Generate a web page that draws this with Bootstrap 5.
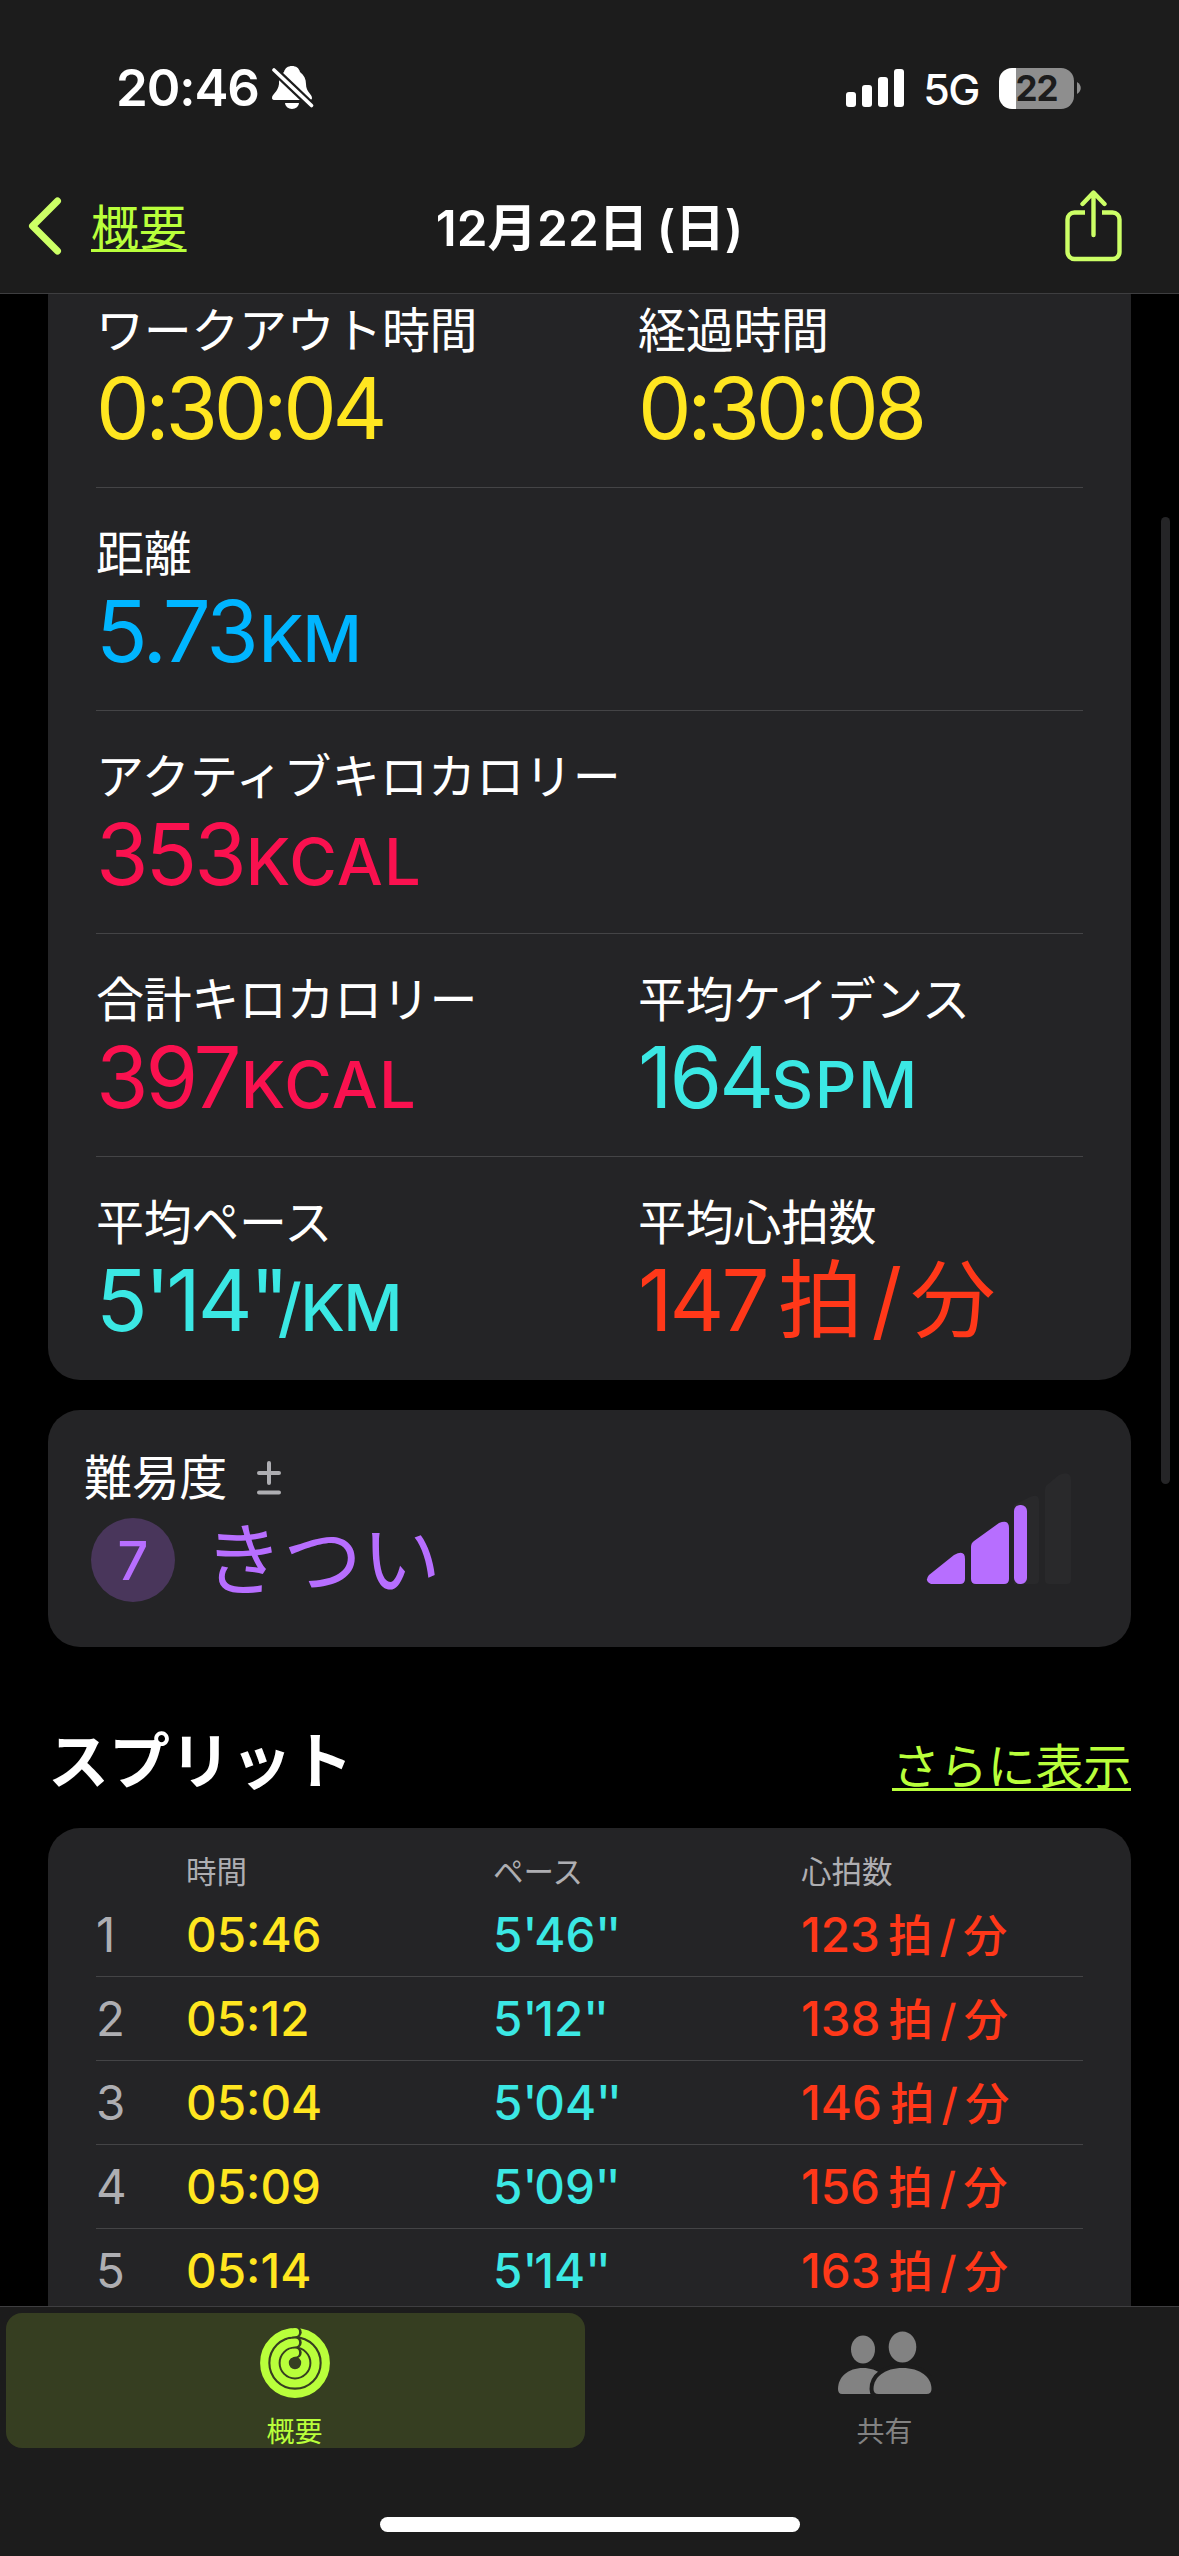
<!DOCTYPE html>
<html lang="ja" data-bs-theme="dark">
<head>
<meta charset="utf-8">
<meta name="viewport" content="width=device-width, initial-scale=1">
<title>12月22日 (日)</title>
<link href="https://cdn.jsdelivr.net/npm/bootstrap@5.3.0/dist/css/bootstrap.min.css" rel="stylesheet">
<style>
  :root { --lime:#b9ff3b; --panel:#242426; --bar:#1c1c1c; --rule:#444446; }
  body { font-family:"Inter","Noto Sans CJK JP",sans-serif; background:#000; color:#fff; width:1179px; height:2556px; overflow:hidden; }
  svg { display:block; flex:none; }
  .app-top { background:var(--bar); height:294px; border-bottom:1px solid #3e3e40; flex:none; z-index:2; }
  .status { height:176px; padding:0 98px 0 116px; }
  .clock { font-size:51px; font-weight:600; line-height:60px; letter-spacing:-1.1px; margin-right:13px; }
  .net { font-size:43px; font-weight:500; line-height:60px; letter-spacing:-1.5px; margin:2px 20px 0 18px; }
  .batt { width:75px; height:41px; border-radius:13px; background:linear-gradient(90deg,#fff 17px,#8e8e8e 17px); color:var(--bar); font-size:35px; font-weight:700; line-height:41px; letter-spacing:-1px; }
  .titlebar { height:100px; padding:0 28px; }
  .titlebar > * { flex:1 1 0; }
  .lime-link { color:var(--lime); font-size:48px; line-height:64px; letter-spacing:-.2px; text-decoration:underline; text-decoration-thickness:3px; text-underline-offset:4px; text-decoration-skip-ink:none; }
  .back-text { margin:3px 0 0 29px; }
  .title { font-size:49.5px; font-weight:600; line-height:64px; white-space:nowrap; word-spacing:-4px; padding-top:3px; }
  .share-icon { margin-right:28px; }
  .feed { height:2012px; padding:0 48px; overflow:hidden; flex:none; }
  .panel { background:var(--panel); border-radius:32px; }
  .summary { margin-top:-29px; padding:0 48px; height:1115px; }
  .metric { height:223px; padding-top:34px; border-bottom:1px solid var(--rule); }
  .metric:last-child { border-bottom:0; }
  .metric > div { width:542px; flex:none; }
  .m-label { font-size:48px; line-height:64px; letter-spacing:-.35px; white-space:nowrap; }
  .m-label.long { letter-spacing:.2px; }
  .m-value { font-size:85px; line-height:92px; letter-spacing:-3px; white-space:nowrap; word-spacing:-9.5px; }
  .m-value.c-time { letter-spacing:-4.3px; }
  .unit { font-size:65px; font-weight:500; letter-spacing:-1px; margin-left:3px; }
  .unit.kcal { letter-spacing:1.2px; margin-left:2px; }
  .unit.spm { letter-spacing:1.5px; margin-left:0; }
  .unit.per { margin-left:0; letter-spacing:-1.5px; }
  .m-value .tick { letter-spacing:-4px; }
  .m-value .tick.pair { letter-spacing:-11.5px; }
  .c-time { color:#ffe620; } .c-dist { color:#00b5ff; } .c-cal { color:#fa114f; } .c-pace { color:#3be8e4; } .c-heart { color:#ff3819; }
  .effort { margin-top:30px; height:237px; padding:36px 60px 0 36px; }
  .plusminus { margin-left:29px; }
  .level-line { margin-top:8px; }
  .level { width:84px; height:84px; border-radius:50%; background:#49365b; color:#b76eff; font-size:54px; font-weight:500; margin-left:7px; }
  .level-name { color:#b76eff; font-size:79px; line-height:84px; margin-left:29px; }
  .effort-chart { margin-top:27px; }
  .section-head { height:181px; padding-top:75px; }
  .section-name { font-size:61px; font-weight:700; line-height:80px; margin:0; }
  .more { margin-top:13px; }
  .splits { height:520px; padding:0 48px; }
  .split { display:grid; grid-template-columns:90px 307px 308px 1fr; height:84px; line-height:83px; font-size:47.5px; font-weight:500; border-bottom:1px solid var(--rule); white-space:nowrap; word-spacing:-4.3px; }
  .split .tick { letter-spacing:-3px; }
  .split .tick.pair { letter-spacing:-4px; }
  .split-head { height:65px; padding-top:23px; line-height:42px; font-size:30.5px; font-weight:400; color:#aeaeb2; border:0; }
  .idx { color:#aeaeb2; font-weight:400; }
  .bpm { font-size:44px; }
  .tabs { height:250px; background:var(--bar); border-top:1px solid #3e3e40; flex:none; padding:6px 6px 0; position:relative; }
  .tab { width:579px; height:135px; border-radius:16px; font-size:28px; line-height:36px; color:#828282; padding-top:15px; }
  .tab.on { background:#363e21; color:var(--lime); padding-right:2px; }
  .home-bar { position:absolute; left:380px; top:210px; width:420px; height:15px; border-radius:8px; background:#fff; }
  .thumb { position:absolute; left:1161px; top:517px; width:9px; height:967px; border-radius:5px; background:#252527; }
</style>
</head>
<body class="d-flex flex-column position-relative">
<header class="app-top">
  <div class="status d-flex align-items-center">
    <span class="clock">20:46</span>
    <svg width="42" height="44" viewBox="0 0 42 44"><path fill="#fff" d="M20 0c-4 0-7 2-8 6C8 9 7 13 7 18 6 26 0 28 0 32q0 2 3 2h34q3 0 3-2c0-4-6-6-6-14 0-5-2-9-6-12-1-4-4-6-8-6zM13 37h14a7 6 0 0 1-14 0z"/><path d="M-1 1 42 42" stroke="#1c1c1c" stroke-width="8"/><path d="M2 4 39.5 39.5" stroke="#fff" stroke-width="3.6" stroke-linecap="round"/></svg>
    <div class="ms-auto d-flex align-items-center">
      <svg width="59" height="38" viewBox="0 0 59 38" fill="#fff"><rect y="23" width="10" height="15" rx="3"/><rect x="16" y="16" width="10" height="22" rx="3"/><rect x="32" y="8" width="10" height="30" rx="3"/><rect x="48" width="10" height="38" rx="3"/></svg>
      <span class="net">5G</span>
      <span class="batt text-center">22</span>
      <svg width="7" height="12" viewBox="0 0 7 12"><path d="M3 0c5 3 5 9 0 12z" fill="#8e8e8e"/></svg>
    </div>
  </div>
  <nav class="titlebar d-flex align-items-center">
    <div class="d-flex align-items-center">
      <svg width="34" height="58" viewBox="0 0 34 58"><path d="M29.5 4 4.5 29 29.5 54" fill="none" stroke="#ccff66" stroke-width="7" stroke-linecap="round" stroke-linejoin="round"/></svg>
      <a class="lime-link back-text" href="#">概要</a>
    </div>
    <div class="title text-center">12月22日 (日)</div>
    <div class="d-flex justify-content-end">
      <svg class="share-icon" width="58" height="72" viewBox="0 0 58 72" fill="none" stroke="#ccff66" stroke-width="4.4"><path d="M20 22.5H9.5a7 7 0 0 0-7 7V62a7 7 0 0 0 7 7h38a7 7 0 0 0 7-7V29.500a7 7 0 0 0-7-7H37"/><path d="M28.500 3v42M17.500 14 28.500 2.500 39.500 14" stroke-linecap="round" stroke-linejoin="round"/></svg>
    </div>
  </nav>
</header>

<main class="feed">
  <section class="panel summary">
    <div class="metric d-flex">
      <div><div class="m-label">ワークアウト時間</div><div class="m-value c-time">0:30:04</div></div>
      <div><div class="m-label">経過時間</div><div class="m-value c-time">0:30:08</div></div>
    </div>
    <div class="metric d-flex"><div><div class="m-label">距離</div><div class="m-value c-dist">5.73<span class="unit">KM</span></div></div></div>
    <div class="metric d-flex"><div><div class="m-label long">アクティブキロカロリー</div><div class="m-value c-cal">353<span class="unit kcal">KCAL</span></div></div></div>
    <div class="metric d-flex">
      <div><div class="m-label">合計キロカロリー</div><div class="m-value c-cal">397<span class="unit kcal">KCAL</span></div></div>
      <div><div class="m-label">平均ケイデンス</div><div class="m-value c-pace">164<span class="unit spm">SPM</span></div></div>
    </div>
    <div class="metric d-flex">
      <div><div class="m-label">平均ペース</div><div class="m-value c-pace">5<span class="tick">'</span>14<span class="tick pair">''</span><span class="unit per">/KM</span></div></div>
      <div><div class="m-label">平均心拍数</div><div class="m-value c-heart">147 拍 / 分</div></div>
    </div>
  </section>

  <section class="panel effort d-flex justify-content-between">
    <div>
      <div class="d-flex align-items-center">
        <span class="m-label">難易度</span>
        <svg class="plusminus" width="26" height="34" viewBox="0 0 26 34"><path d="M13 2v20M3 12h20M3 31.500h20" stroke="#aeaeb2" stroke-width="4" stroke-linecap="round"/></svg>
      </div>
      <div class="level-line d-flex">
        <span class="level d-flex align-items-center justify-content-center">7</span>
        <span class="level-name">きつい</span>
      </div>
    </div>
    <svg class="effort-chart" width="145" height="112" viewBox="0 0 145 112">
      <g fill="#29292b"><path d="M88 32 104 24q9-4 9 4v79q0 4-4 4H88zM119 17q0-4 3-6l11-9q12-5 12 5v100q0 4-4 4h-18q-4 0-4-4z"/></g>
      <g fill="#b76eff"><path d="M3 102 28 82q11-6 11 4v20q0 5-5 5H5q-7-3-2-9z"/><path d="M45 74q0-4 3-6l25-18q10-4 10 5v51q0 5-5 5H50q-5 0-5-5z"/><rect x="88" y="32" width="13" height="79" rx="6"/></g>
    </svg>
  </section>

  <div class="section-head d-flex justify-content-between align-items-start">
    <h2 class="section-name">スプリット</h2>
    <a class="lime-link more" href="#">さらに表示</a>
  </div>

  <section class="panel splits">
    <div class="split split-head"><span></span><span>時間</span><span>ペース</span><span>心拍数</span></div>
    <div class="split"><span class="idx">1</span><span class="c-time">05:46</span><span class="c-pace">5<span class="tick">'</span>46<span class="tick pair">''</span></span><span class="c-heart">123 <span class="bpm">拍 / 分</span></span></div>
    <div class="split"><span class="idx">2</span><span class="c-time">05:12</span><span class="c-pace">5<span class="tick">'</span>12<span class="tick pair">''</span></span><span class="c-heart">138 <span class="bpm">拍 / 分</span></span></div>
    <div class="split"><span class="idx">3</span><span class="c-time">05:04</span><span class="c-pace">5<span class="tick">'</span>04<span class="tick pair">''</span></span><span class="c-heart">146 <span class="bpm">拍 / 分</span></span></div>
    <div class="split"><span class="idx">4</span><span class="c-time">05:09</span><span class="c-pace">5<span class="tick">'</span>09<span class="tick pair">''</span></span><span class="c-heart">156 <span class="bpm">拍 / 分</span></span></div>
    <div class="split"><span class="idx">5</span><span class="c-time">05:14</span><span class="c-pace">5<span class="tick">'</span>14<span class="tick pair">''</span></span><span class="c-heart">163 <span class="bpm">拍 / 分</span></span></div>
  </section>
</main>
<div class="thumb"></div>

<footer class="tabs">
  <div class="d-flex">
    <div class="tab on d-flex flex-column align-items-center">
      <svg width="70" height="70" viewBox="-35 -35 70 70" fill="none" stroke="#b9ff3b" stroke-width="8.200">
        <circle r="30.800"/><circle r="20.500"/><circle r="10.300"/>
        <g fill="#363e21" stroke="none"><circle cx="1" cy="-30.800" r="5.700"/><circle cx="1" cy="-20.500" r="5.700"/><circle cx="1" cy="-10.300" r="5.700"/></g>
        <g stroke-linecap="round"><path d="M-5.400-30.300Q-2-30.800 0-30.800"/><path d="M-5.300-19.800Q-2-20.500 0-20.500"/><path d="M-4.500-9.200Q-2-10.300 0-10.300"/></g>
      </svg>
      <span class="mt-3">概要</span>
    </div>
    <div class="tab d-flex flex-column align-items-center ms-2">
      <svg class="ms-1" width="94" height="70" viewBox="0 0 94 70" fill="#828282"><ellipse cx="25" cy="21.500" rx="12" ry="14"/><path d="M0 61C0 49 10 40 25 40s25 9 25 21q0 5-4 5H4q-4 0-4-5z"/><path d="M35.500 61C35.500 49 47 40 64.500 40s29 9 29 21q0 5-5 5h-48q-5 0-5-5z" stroke="#1c1c1c" stroke-width="8"/><ellipse cx="64.500" cy="19" rx="13.800" ry="15.500"/><path d="M35.500 61C35.500 49 47 40 64.500 40s29 9 29 21q0 5-5 5h-48q-5 0-5-5z"/></svg>
      <span class="mt-3 ms-1">共有</span>
    </div>
  </div>
  <div class="home-bar"></div>
</footer>
<script src="https://cdn.jsdelivr.net/npm/bootstrap@5.3.0/dist/js/bootstrap.bundle.min.js"></script>
</body>
</html>
